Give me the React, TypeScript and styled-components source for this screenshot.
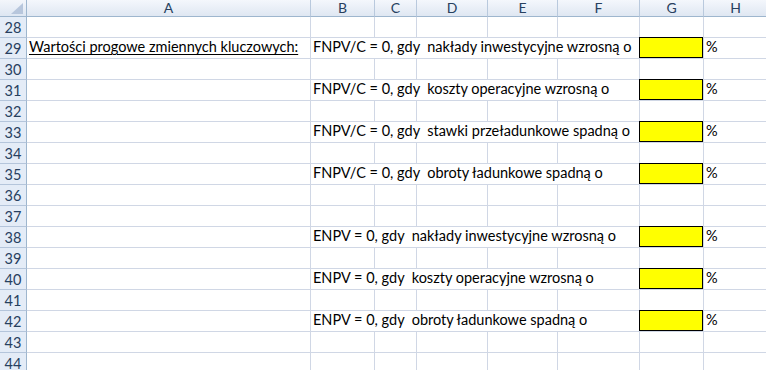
import * as React from 'react'
import styled, { createGlobalStyle, css } from 'styled-components'

const GlobalStyle = createGlobalStyle`
	html, body {
		margin: 0;
		padding: 0;
		background: #ffffff;
		overflow: hidden;
	}
`

const grid = '#D0D7E5'
const headLine = '#9EB6CE'

const Sheet = styled.div`
	display: grid;
	grid-template-columns: 27px 284px 64px 42px 71px 70px 82px 64px 64px;
	grid-template-rows: 17px;
	grid-auto-rows: 21px;
	width: 768px;
	font-family: Lato, 'Liberation Sans', sans-serif;
	font-size: 14.5px;
	color: #000000;
`

const Corner = styled.div`
	position: relative;
	background: linear-gradient(#f3f6fb, #dde6f2);
	border-right: 1px solid ${headLine};
	border-bottom: 1px solid ${headLine};
	box-sizing: border-box;
	svg {
		position: absolute;
		right: 3px;
		bottom: 2px;
	}
`

const ColHead = styled.div`
	display: flex;
	align-items: center;
	justify-content: center;
	box-sizing: border-box;
	background: linear-gradient(#f4f7fc, #dfe7f2);
	border-right: 1px solid #b9c9dd;
	border-bottom: 1px solid ${headLine};
	color: #27405f;
	font-size: 14px;
	line-height: 16px;
`

const RowHead = styled.div`
	display: flex;
	align-items: center;
	justify-content: center;
	box-sizing: border-box;
	background: #e4ecf7;
	border-right: 1px solid ${headLine};
	border-bottom: 1px solid #b4c5db;
	color: #27405f;
	font-size: 14.5px;
	padding-top: 1px;
`

const Cell = styled.div<{ $span?: number; $marked?: boolean }>`
	display: flex;
	align-items: flex-end;
	box-sizing: border-box;
	padding: 0 2px 3px 2px;
	border-right: 1px solid ${grid};
	border-bottom: 1px solid ${grid};
	white-space: pre;
	line-height: 16px;
	${props => props.$span && css`
		grid-column: span ${props.$span};
	`}
	${props => props.$marked && css`
		position: relative;
		background: #ffff00;
		&::before {
			content: '';
			position: absolute;
			top: -1px;
			left: -1px;
			right: 0;
			bottom: 0;
			border: 1px solid #000000;
		}
	`}
`

const Underlined = styled.span`
	text-decoration: underline;
	text-underline-offset: 2px;
`

const columns = ['A', 'B', 'C', 'D', 'E', 'F', 'G', 'H']

const lines: Record<number, string> = {
	29: 'FNPV/C = 0, gdy  nakłady inwestycyjne wzrosną o',
	31: 'FNPV/C = 0, gdy  koszty operacyjne wzrosną o',
	33: 'FNPV/C = 0, gdy  stawki przeładunkowe spadną o',
	35: 'FNPV/C = 0, gdy  obroty ładunkowe spadną o',
	38: 'ENPV = 0, gdy  nakłady inwestycyjne wzrosną o',
	40: 'ENPV = 0, gdy  koszty operacyjne wzrosną o',
	42: 'ENPV = 0, gdy  obroty ładunkowe spadną o',
}

const rows = Array.from({ length: 17 }, (_, i) => 28 + i)

const Row = ({ n }: { n: number }) => {
	const text = lines[n]
	return (
		<>
			<RowHead>{n}</RowHead>
			<Cell>
				{n === 29 && <Underlined>Wartości progowe zmiennych kluczowych:</Underlined>}
			</Cell>
			{text ? (
				<>
					<Cell $span={5}>{text}</Cell>
					<Cell $marked />
					<Cell>%</Cell>
				</>
			) : (
				columns.slice(1).map(c => <Cell key={c} />)
			)}
		</>
	)
}

export default function App() {
	return (
		<>
			<GlobalStyle />
			<Sheet>
				<Corner>
					<svg width="12" height="11" viewBox="0 0 12 11">
						<polygon points="12,0 12,11 0,11" fill="#b7c6dc" />
					</svg>
				</Corner>
				{columns.map(c => <ColHead key={c}>{c}</ColHead>)}
				{rows.map(n => <Row key={n} n={n} />)}
			</Sheet>
		</>
	)
}
